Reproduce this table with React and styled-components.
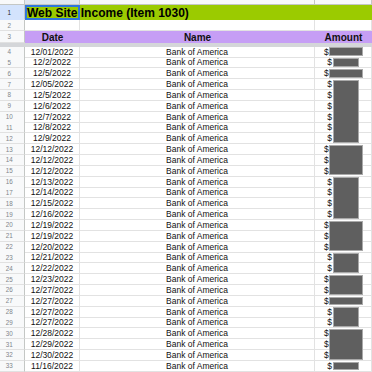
import React from 'react';
import styled, { createGlobalStyle } from 'styled-components';

const ROW_H = 10.84;
const COLS = '25px 55px 235px 57px';

const Global = createGlobalStyle`
  html, body { margin: 0; padding: 0; background: #fff; }
  body { font-family: "Liberation Sans", Arial, sans-serif; overflow: hidden; }
`;

const Sheet = styled.div`
  width: 372px;
  height: 372px;
  overflow: hidden;
  background: #fff;
  color: #111;
`;

const Row = styled.div`
  display: grid;
  grid-template-columns: ${COLS};
  height: ${p => p.$h}px;
  background: ${p => p.$bg || 'transparent'};
`;

const RowHead = styled.div`
  display: flex;
  align-items: center;
  justify-content: center;
  padding-right: 5.6px;
  box-sizing: border-box;
  background: ${p => (p.$active ? '#d3e3fd' : '#f8f9fa')};
  color: ${p => (p.$active ? '#1f1f1f' : '#80868b')};
  font-size: 6.3px;
  border-right: 1px solid #c4c7c5;
  border-bottom: 1px solid ${p => (p.$active ? '#d3e3fd' : '#e1e1e1')};
`;

const ColHead = styled.div`
  background: ${p => (p.$active ? '#dfe6f1' : '#f8f9fa')};
  border-right: 1px solid #c4c7c5;
  border-bottom: 1px solid #c4c7c5;
`;

const Cell = styled.div`
  display: flex;
  align-items: center;
  justify-content: ${p => p.$align || 'center'};
  box-sizing: border-box;
  white-space: nowrap;
  font-size: ${p => (p.$bold ? 10 : 8.5)}px;
  font-weight: ${p => (p.$bold ? 700 : 400)};
  border-right: ${p => (p.$plain ? 'none' : '1px solid #e2e2e2')};
  border-bottom: ${p => (p.$plain ? 'none' : '1px solid #e2e2e2')};
  padding-left: ${p => p.$pad || 0}px;
`;

const TitleCell = styled.div`
  display: flex;
  align-items: center;
  box-sizing: border-box;
  padding-left: 2px;
  white-space: nowrap;
  font-size: 12px;
  font-weight: 700;
  color: #000;
  box-shadow: inset 0 0 0 2px #2f76de;
`;

const Filler = styled.div`
  grid-column: span ${p => p.$span || 1};
`;

const FrozenBar = styled.div`
  height: 3.2px;
  background: #d4d6d9;
`;

const Body = styled.div`
  position: relative;
`;

const Redaction = styled.div`
  position: absolute;
  box-sizing: border-box;
  background: #5f5f5f;
  border: 1px solid #a9a9a9;
  left: ${p => (p.$wide ? 329 : 332.7)}px;
  width: ${p => (p.$wide ? 34 : 26.3)}px;
`;

const dates = [
  '12/01/2022', '12/2/2022', '12/5/2022', '12/05/2022', '12/5/2022', '12/6/2022',
  '12/7/2022', '12/8/2022', '12/9/2022', '12/12/2022', '12/12/2022', '12/12/2022',
  '12/13/2022', '12/14/2022', '12/15/2022', '12/16/2022', '12/19/2022', '12/19/2022',
  '12/20/2022', '12/21/2022', '12/22/2022', '12/23/2022', '12/27/2022', '12/27/2022',
  '12/27/2022', '12/27/2022', '12/28/2022', '12/29/2022', '12/30/2022', '11/16/2022',
];

const wideRows = new Set([4, 6, 13, 14, 15, 20, 21, 22, 25, 26, 27, 30, 31, 32]);

const boxes = [
  [4, 4, true], [5, 5, false], [6, 6, true], [7, 12, false], [13, 15, true],
  [16, 19, false], [20, 22, true], [23, 24, false], [25, 26, true], [27, 27, true],
  [28, 29, false], [30, 32, true], [33, 33, false],
];

export default function App() {
  return (
    <Sheet>
      <Global />
      <Row $h={5.3}>
        <ColHead />
        <ColHead $active />
        <ColHead />
        <ColHead />
      </Row>
      <Row $h={15.2} $bg="#9bcb00">
        <RowHead $active>1</RowHead>
        <TitleCell>Web Site Income (Item 1030)</TitleCell>
        <Filler $span={2} />
      </Row>
      <Row $h={10.8}>
        <RowHead>2</RowHead>
        <Cell />
        <Cell />
        <Cell />
      </Row>
      <Row $h={12.2} $bg="#c69ef5">
        <RowHead>3</RowHead>
        <Cell $bold $plain>Date</Cell>
        <Cell $bold $plain>Name</Cell>
        <Cell $bold $plain>Amount</Cell>
      </Row>
      <FrozenBar />
      <Body>
        {dates.map((d, i) => {
          const n = i + 4;
          return (
            <Row key={n} $h={ROW_H}>
              <RowHead>{n}</RowHead>
              <Cell>{d}</Cell>
              <Cell>Bank of America</Cell>
              <Cell $align="flex-start" $pad={wideRows.has(n) ? 9 : 12.3}>$</Cell>
            </Row>
          );
        })}
        {boxes.map(([a, b, wide]) => (
          <Redaction
            key={a}
            $wide={wide}
            style={{ top: (a - 4) * ROW_H + 0.6, height: (b - a + 1) * ROW_H - 2 }}
          />
        ))}
      </Body>
    </Sheet>
  );
}
